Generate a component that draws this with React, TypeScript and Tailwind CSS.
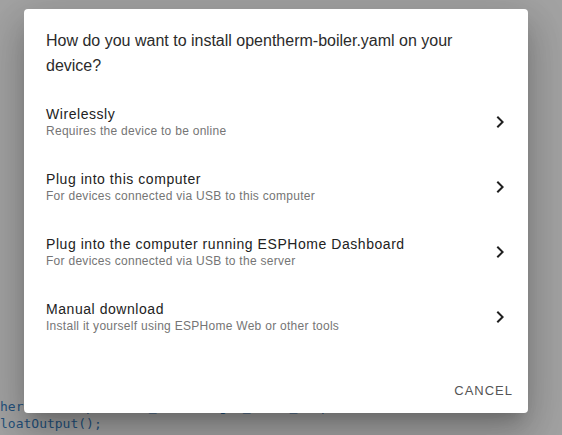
import React from "react";

const items = [
  { title: "Wirelessly", sub: "Requires the device to be online" },
  { title: "Plug into this computer", sub: "For devices connected via USB to this computer" },
  { title: "Plug into the computer running ESPHome Dashboard", sub: "For devices connected via USB to the server" },
  { title: "Manual download", sub: "Install it yourself using ESPHome Web or other tools" },
];

function Chevron() {
  return (
    <svg width="24" height="24" viewBox="0 0 24 24" className="shrink-0">
      <path d="M8.59,16.58L13.17,12L8.59,7.41L10,6L16,12L10,18L8.59,16.58Z" fill="#1f1f1f" />
    </svg>
  );
}

export default function App() {
  return (
    <div className="relative w-[562px] h-[435px] overflow-hidden bg-[#a3a3a3]" style={{ fontFamily: '"Liberation Sans", Arial, sans-serif' }}>
      <div className="pt-[398px] text-[13px] leading-[17px] text-[#24527d]" style={{ fontFamily: '"DejaVu Sans Mono", "Liberation Mono", monospace' }}>
        <div className="whitespace-pre">herm = id(opentherm_boiler).get_float_output();</div>
        <div className="whitespace-pre">loatOutput();</div>
      </div>

      <div className="absolute left-[24px] top-[9px] w-[504px] h-[404px] bg-white rounded-[4px] flex flex-col shadow-[0_11px_15px_-7px_rgba(0,0,0,0.2),0_24px_38px_3px_rgba(0,0,0,0.14),0_9px_46px_8px_rgba(0,0,0,0.12)]">
        <div className="pt-[19px] pl-[22px] pr-[20px] text-[16px] leading-[25px] text-[#2b2b2b]">
          How do you want to install opentherm-boiler.yaml on your device?
        </div>
        <div className="pt-[11px] flex flex-col">
          {items.map((it) => (
            <div key={it.title} className="h-[65px] flex items-center pl-[22px] pr-[16px]">
              <div className="flex-1 flex flex-col">
                <div className="text-[14px] leading-[18px] text-[#222] tracking-[0.55px]">{it.title}</div>
                <div className="text-[12px] leading-[16px] text-[#757575] tracking-[0.28px]">{it.sub}</div>
              </div>
              <Chevron />
            </div>
          ))}
        </div>
        <div className="flex-1" />
        <div className="flex justify-end pr-[8px] pb-[4px]">
          <div className="h-[36px] px-[7px] flex items-center text-[13px] tracking-[1px] text-[#555]">CANCEL</div>
        </div>
      </div>
    </div>
  );
}
